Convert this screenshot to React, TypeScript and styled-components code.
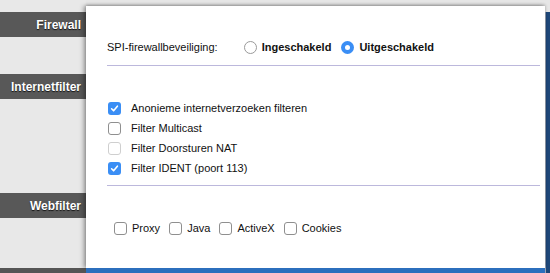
import React from "react";
import styled, { createGlobalStyle } from "styled-components";

const Global = createGlobalStyle`
  html, body { margin: 0; padding: 0; }
  body {
    width: 550px;
    height: 273px;
    overflow: hidden;
    background: #e6e6e6;
    font-family: "Liberation Sans", Arial, Helvetica, sans-serif;
  }
`;

const Frame = styled.div`
  display: flex;
  width: 550px;
  height: 273px;
`;

const Sidebar = styled.aside`
  width: 86px;
  flex: none;
  display: flex;
  flex-direction: column;
  background: #e8e8e8;
`;

const SideHeading = styled.div<{ $top: number }>`
  margin-top: ${(p) => p.$top}px;
  height: 25px;
  flex: none;
  background: #585858;
  color: #fff;
  font-weight: bold;
  font-size: 12px;
  display: flex;
  align-items: center;
  justify-content: flex-end;
  padding-right: 5px;
  text-shadow: 0 1px 1px rgba(0, 0, 0, 0.8);
`;

const SideFoot = styled.div`
  margin-top: auto;
  height: 5px;
  background: #555;
`;

const Main = styled.main`
  flex: 1;
  display: flex;
  flex-direction: column;
  padding-top: 6px;
  min-width: 0;
`;

const Panel = styled.div`
  flex: 1;
  background: #fff;
  position: relative;
  z-index: 1;
  box-shadow: -3px 0 4px rgba(0, 0, 0, 0.25), 0 -1px 3px rgba(0, 0, 0, 0.3);
  display: flex;
  flex-direction: column;
`;

const MainFoot = styled.div`
  height: 5px;
  background: #2c6fbd;
  position: relative;
  z-index: 2;
`;

const RightBar = styled.div`
  width: 5px;
  flex: none;
  margin-top: 12px;
  background: #1e4779;
  border-left: 1px solid #9aa4b4;
  box-sizing: border-box;
`;

const Section = styled.section<{ $pt: number; $pb: number; $line?: boolean }>`
  margin: 0 5px 0 21px;
  padding-top: ${(p) => p.$pt}px;
  padding-bottom: ${(p) => p.$pb}px;
  border-bottom: ${(p) => (p.$line ? "1px solid #bcb8dc" : "none")};
`;

const Row = styled.div`
  height: 20px;
  display: flex;
  align-items: center;
  font-size: 11px;
  color: #111;
`;

const FieldLabel = styled.span`
  margin-right: 26px;
`;

const RadioOption = styled.label<{ $gap?: number }>`
  display: flex;
  align-items: center;
  gap: 5px;
  font-weight: bold;
  margin-right: ${(p) => p.$gap ?? 0}px;
`;

const RadioCircle = styled.span<{ $on?: boolean }>`
  width: 13px;
  height: 13px;
  box-sizing: border-box;
  border-radius: 50%;
  border: ${(p) => (p.$on ? "none" : "1px solid #9a9a9a")};
  background: ${(p) => (p.$on ? "#3a8ef5" : "#fff")};
  display: flex;
  align-items: center;
  justify-content: center;
  &::after {
    content: "";
    display: ${(p) => (p.$on ? "block" : "none")};
    width: 5px;
    height: 5px;
    border-radius: 50%;
    background: #fff;
  }
`;

const CheckRow = styled.label<{ $indent: number }>`
  height: 20px;
  display: flex;
  align-items: center;
  gap: 10px;
  padding-left: ${(p) => p.$indent}px;
  font-size: 11px;
  color: #111;
`;

const InlineChecks = styled.div`
  height: 20px;
  display: flex;
  align-items: center;
  padding-left: 7px;
  gap: 9px;
  font-size: 11px;
  color: #111;
`;

const InlineCheck = styled.label`
  display: flex;
  align-items: center;
  gap: 5px;
`;

const Box = styled.span<{ $on?: boolean; $faint?: boolean }>`
  width: 13px;
  height: 13px;
  box-sizing: border-box;
  border-radius: 3px;
  flex: none;
  border: ${(p) =>
    p.$on ? "none" : `1px solid ${p.$faint ? "#cfcfcf" : "#8f8f8f"}`};
  background: ${(p) => (p.$on ? "#3a8ef5" : "#fff")};
  display: flex;
  align-items: center;
  justify-content: center;
`;

const Check = () => (
  <svg width="9" height="9" viewBox="0 0 9 9">
    <path d="M1.6 4.8 L3.6 6.8 L7.4 2.2" fill="none" stroke="#fff" strokeWidth="1.6" strokeLinecap="round" strokeLinejoin="round" />
  </svg>
);

const Checkbox = ({ on, faint }: { on?: boolean; faint?: boolean }) => (
  <Box $on={on} $faint={faint}>{on && <Check />}</Box>
);

const internet = [
  { label: "Anonieme internetverzoeken filteren", on: true },
  { label: "Filter Multicast", on: false },
  { label: "Filter Doorsturen NAT", on: false, faint: true },
  { label: "Filter IDENT (poort 113)", on: true },
];

const web = ["Proxy", "Java", "ActiveX", "Cookies"];

export default function App() {
  return (
    <>
      <Global />
      <Frame>
        <Sidebar>
          <SideHeading $top={12}>Firewall</SideHeading>
          <SideHeading $top={37}>Internetfilter</SideHeading>
          <SideHeading $top={94}>Webfilter</SideHeading>
          <SideFoot />
        </Sidebar>
        <Main>
          <Panel>
            <Section $pt={31} $pb={8} $line>
              <Row>
                <FieldLabel>SPI-firewallbeveiliging:</FieldLabel>
                <RadioOption $gap={10}>
                  <RadioCircle />
                  Ingeschakeld
                </RadioOption>
                <RadioOption>
                  <RadioCircle $on />
                  Uitgeschakeld
                </RadioOption>
              </Row>
            </Section>
            <Section $pt={32} $pb={7} $line>
              {internet.map((item) => (
                <CheckRow key={item.label} $indent={1}>
                  <Checkbox on={item.on} faint={item.faint} />
                  {item.label}
                </CheckRow>
              ))}
            </Section>
            <Section $pt={32} $pb={0}>
              <InlineChecks>
                {web.map((w) => (
                  <InlineCheck key={w}>
                    <Checkbox />
                    {w}
                  </InlineCheck>
                ))}
              </InlineChecks>
            </Section>
          </Panel>
          <MainFoot />
        </Main>
        <RightBar />
      </Frame>
    </>
  );
}
